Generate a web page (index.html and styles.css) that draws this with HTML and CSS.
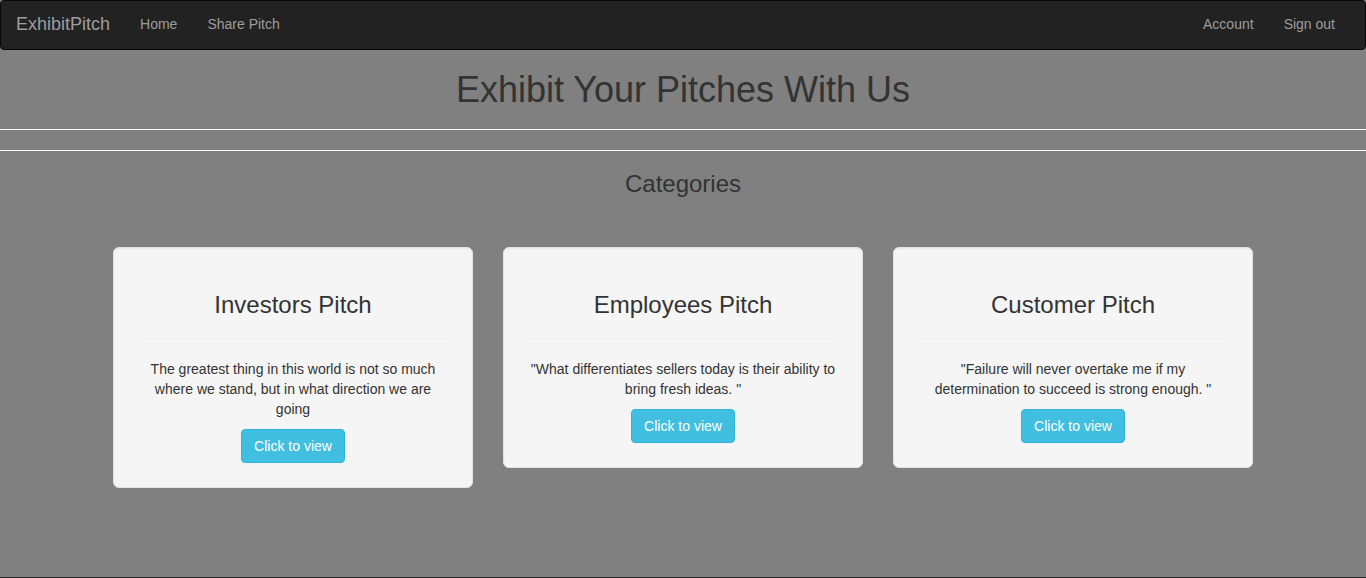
FILE: index.html
```html
<!DOCTYPE html>
<html lang="en">
<head>
<meta charset="utf-8">
<title>ExhibitPitch</title>
<link rel="stylesheet" href="styles.css">
</head>
<body>
<nav class="navbar">
  <div class="nav-inner">
    <div class="nav-left">
      <a class="brand" href="#">ExhibitPitch</a>
      <a class="nav-link" href="#">Home</a>
      <a class="nav-link" href="#">Share Pitch</a>
    </div>
    <div class="nav-right">
      <a class="nav-link" href="#">Account</a>
      <a class="nav-link" href="#">Sign out</a>
    </div>
  </div>
</nav>
<main class="main">
  <h1 class="title">Exhibit Your Pitches With Us</h1>
  <hr class="rule">
  <hr class="rule">
  <h3 class="subtitle">Categories</h3>
  <div class="container">
    <div class="cards">
      <div class="card">
        <h3 class="card-title">Investors Pitch</h3>
        <hr class="card-rule">
        <p class="card-text">The greatest thing in this world is not so much where we stand, but in what direction we are going</p>
        <a class="btn" href="#">Click to view</a>
      </div>
      <div class="card">
        <h3 class="card-title">Employees Pitch</h3>
        <hr class="card-rule">
        <p class="card-text">"What differentiates sellers today is their ability to bring fresh ideas. "</p>
        <a class="btn" href="#">Click to view</a>
      </div>
      <div class="card">
        <h3 class="card-title">Customer Pitch</h3>
        <hr class="card-rule">
        <p class="card-text">"Failure will never overtake me if my determination to succeed is strong enough. "</p>
        <a class="btn" href="#">Click to view</a>
      </div>
    </div>
  </div>
</main>
<footer class="footer"></footer>
</body>
</html>
```
FILE: styles.css
```css
* { box-sizing: border-box; }
html, body { margin: 0; padding: 0; }
body {
  background: #808080;
  font-family: "Liberation Sans", Arial, Helvetica, sans-serif;
  font-size: 14px;
  line-height: 20px;
  color: #333;
}
a { text-decoration: none; }

.navbar {
  height: 50px;
  background: #222;
  border: 1px solid #080808;
  border-radius: 4px;
}
.nav-inner {
  display: flex;
  justify-content: space-between;
  padding: 0 15px 0 0;
}
.nav-left, .nav-right { display: flex; }
.brand {
  display: block;
  padding: 13px 15px 15px;
  height: 48px;
  font-size: 18px;
  line-height: 20px;
  color: #9d9d9d;
}
.nav-link {
  display: block;
  padding: 13px 15px 15px;
  line-height: 20px;
  color: #9d9d9d;
}

.main {
  min-height: 527px;
  padding-top: 20px;
}
.title {
  margin: 0 0 10px;
  text-align: center;
  font-size: 36px;
  font-weight: 500;
  line-height: 1.1;
}
.rule {
  margin: 19px 0 0;
  border: 0;
  border-top: 1px solid #fff;
}
.rule + .rule { margin-top: 20px; }
.subtitle {
  margin: 20px 0 0;
  text-align: center;
  font-size: 24px;
  font-weight: 500;
  line-height: 1.1;
}
.container {
  width: 1170px;
  margin: 0 auto;
  padding: 50px 0 0;
}
.cards {
  display: grid;
  grid-template-columns: repeat(3, 360px);
  column-gap: 30px;
  justify-content: center;
  align-items: start;
}
.card {
  background: #f5f5f5;
  border: 1px solid #e3e3e3;
  border-radius: 6px;
  box-shadow: inset 0 1px 1px rgba(0,0,0,.05);
  padding: 24px;
  text-align: center;
  margin-bottom: 20px;
}
.card-title {
  margin: 20px 0 10px;
  font-size: 24px;
  font-weight: 500;
  line-height: 1.1;
  color: #333;
}
.card-rule {
  margin: 20px 0;
  border: 0;
  border-top: 1px solid #eee;
}
.card-text {
  margin: 0 0 10px;
}
.btn {
  display: inline-block;
  padding: 6px 12px;
  font-size: 14px;
  line-height: 20px;
  color: #fff;
  background: #40bfe0;
  border: 1px solid #30b3da;
  border-radius: 4px;
}
.footer {
  height: 50px;
  background: #222;
}
```
